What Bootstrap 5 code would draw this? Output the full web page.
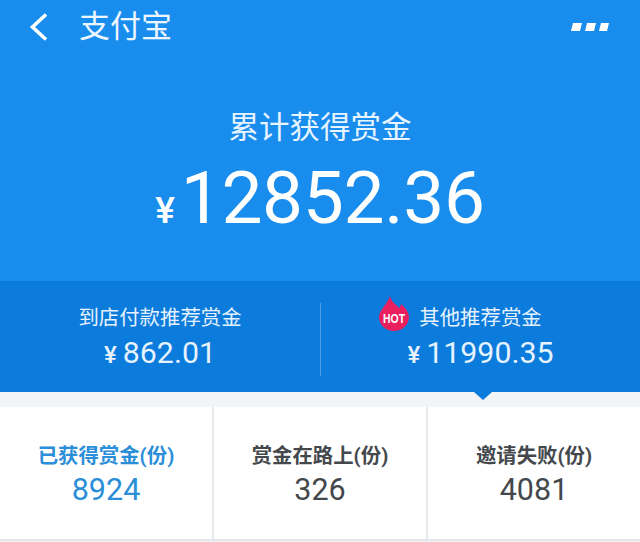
<!DOCTYPE html>
<html lang="zh">
<head>
<meta charset="utf-8">
<title>支付宝</title>
<link href="https://cdn.jsdelivr.net/npm/bootstrap@5.3.0/dist/css/bootstrap.min.css" rel="stylesheet">
<style>
html,body{height:542px;overflow:hidden;background:#f2f4f5;font-family:Roboto,"Noto Sans CJK SC",sans-serif}
.hero-zone{height:281px;background:#188dee;color:#fff}
.top-bar{height:54px;padding:0 31px 0 28px}
.back-ico{width:22px;height:30px}
.page-name{font-size:31px;line-height:54px;margin-left:29px;color:#eef7ff}
.dots-ico{width:38px;height:10px}
.sum-label{font-size:30.5px;line-height:40px;margin-top:54px;color:#e8f4ff}
.sum-value{font-size:73px;line-height:80px;margin-top:10px;letter-spacing:-.3px}
.yen-big{font-size:37px;font-weight:500;margin-right:6px}
.band-zone{height:111px;background:#0b7bdc;color:#e6f2fd}
.band-left{width:321px;flex:none;border-right:1px solid #4f9fe4;height:73px;margin-top:22px}
.band-right{flex:1;height:73px;margin-top:22px}
.band-label{font-size:20.4px;line-height:30px}
.band-value{font-size:30.3px;line-height:40px;margin-top:0}
.yen-small{font-size:24px;font-weight:500;margin-right:6px}
.hot-wrap{display:inline-block}
.hot-mark{width:32px;height:36px;top:-7px;left:-41px}
.gap-zone{height:15px}
.notch{width:0;height:0;border-left:9px solid transparent;border-right:9px solid transparent;border-top:8px solid #0b7bdc;top:0;left:474px}
.stat-zone{height:134px;background:#fff;border-bottom:2px solid #e4e6e8}
.stat-cell{width:214px;flex:none;border-right:2px solid #e6e8ea;padding-top:34px;color:#44484d}
.stat-cell.last-cell{flex:1;width:auto;border-right:0}
.stat-label{font-size:20.4px;line-height:30px;font-weight:700}
.stat-num{font-size:30.5px;line-height:36px;margin-top:1px}
.stat-cell.on-cell{color:#2b8ed8}
</style>
</head>
<body>
<div class="hero-zone text-center">
  <div class="top-bar d-flex align-items-center justify-content-between">
    <div class="d-flex align-items-center">
      <svg class="back-ico" viewBox="0 0 22 30" aria-hidden="true"><path d="M18 2.5 4.5 15 18 27.5" fill="none" stroke="#fff" stroke-width="3.6"/></svg>
      <span class="page-name">支付宝</span>
    </div>
    <svg class="dots-ico" viewBox="0 0 38 10" aria-hidden="true"><g fill="#fff"><path d="M2 1h9l-2 8H0z"/><path d="M16 1h9l-2 8h-9z"/><path d="M30 1h8l-2 8h-8z"/></g></svg>
  </div>
  <div class="sum-label">累计获得赏金</div>
  <div class="sum-value"><span class="yen-big">¥</span>12852.36</div>
</div>
<div class="band-zone d-flex text-center">
  <div class="band-left">
    <div class="band-label">到店付款推荐赏金</div>
    <div class="band-value"><span class="yen-small">¥</span>862.01</div>
  </div>
  <div class="band-right">
    <div class="band-label">
      <span class="hot-wrap position-relative">
        <svg class="hot-mark position-absolute" viewBox="0 0 32 36" aria-hidden="true"><path d="M12 0C13 6 18 8 21 12C22 11 23 10 23 8C28 12 31 17 31 21C31 29 24 35 16 35C8 35 1 29 1 21C1 14 9 9 12 0z" fill="#ea1f5e"/><text x="16" y="27" text-anchor="middle" font-family="Liberation Sans,sans-serif" font-weight="700" font-size="12" textLength="22" lengthAdjust="spacingAndGlyphs" fill="#fff">HOT</text></svg>
        其他推荐赏金
      </span>
    </div>
    <div class="band-value"><span class="yen-small">¥</span>11990.35</div>
  </div>
</div>
<div class="gap-zone position-relative"><div class="notch position-absolute"></div></div>
<div class="stat-zone d-flex text-center">
  <div class="stat-cell on-cell">
    <div class="stat-label">已获得赏金(份)</div>
    <div class="stat-num">8924</div>
  </div>
  <div class="stat-cell">
    <div class="stat-label">赏金在路上(份)</div>
    <div class="stat-num">326</div>
  </div>
  <div class="stat-cell last-cell">
    <div class="stat-label">邀请失败(份)</div>
    <div class="stat-num">4081</div>
  </div>
</div>
<script src="https://cdn.jsdelivr.net/npm/bootstrap@5.3.0/dist/js/bootstrap.bundle.min.js"></script>
</body>
</html>
